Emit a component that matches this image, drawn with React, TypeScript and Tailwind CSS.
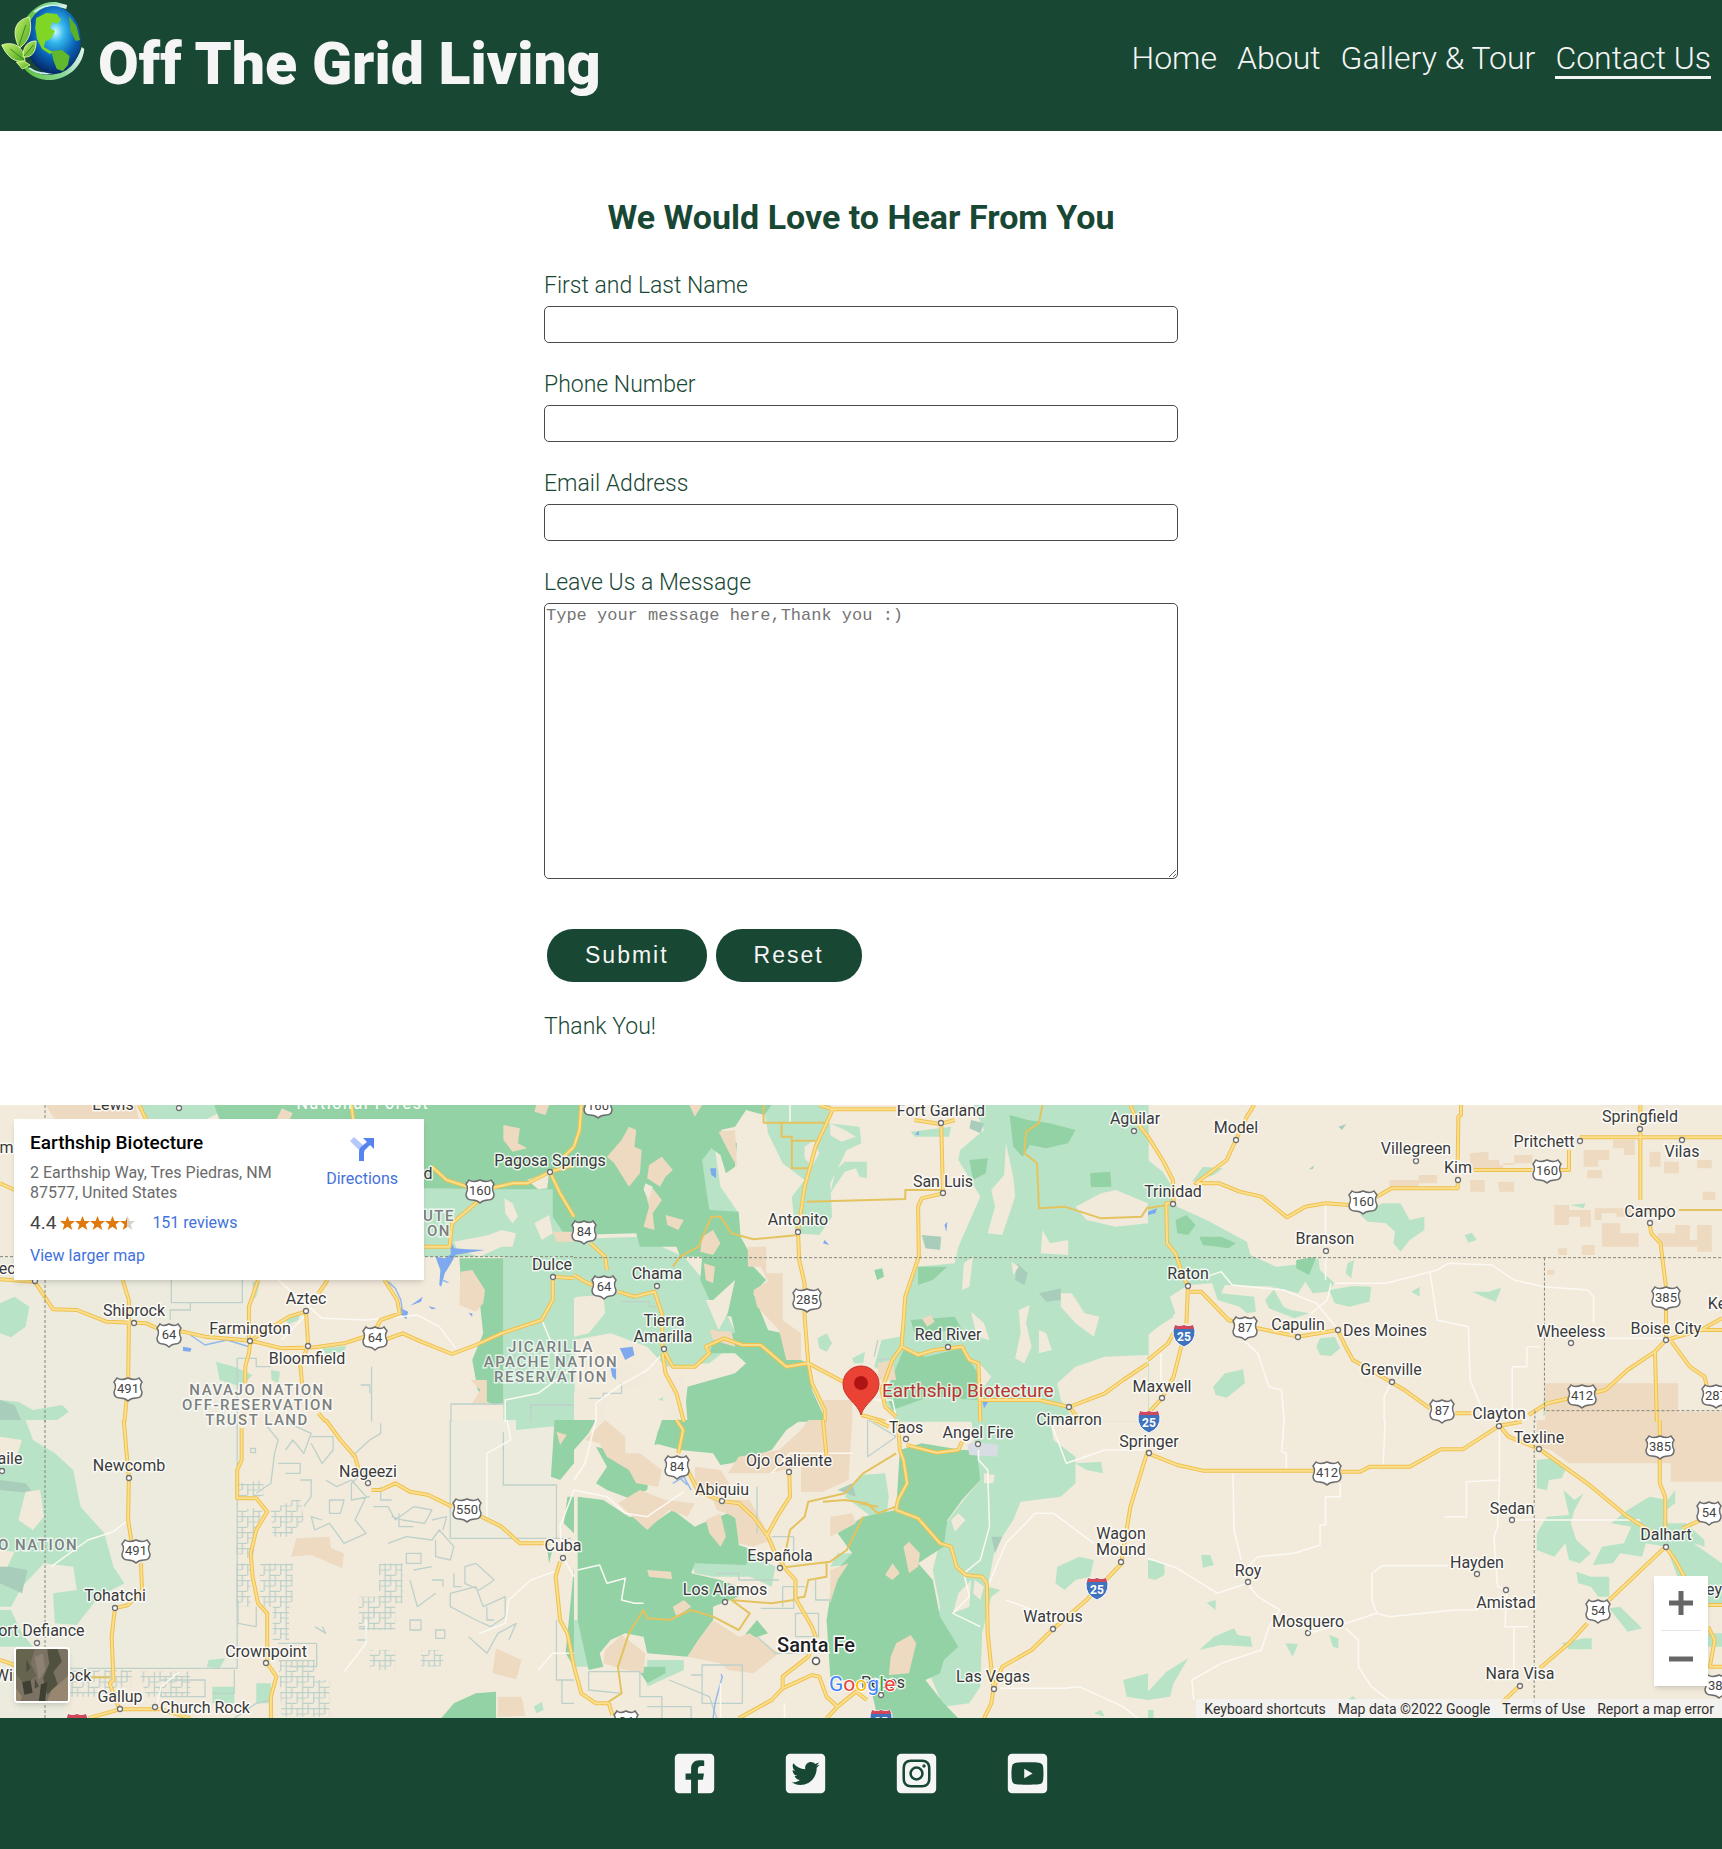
import React from "react";
import {
  FaFacebookSquare,
  FaInstagramSquare,
  FaTwitterSquare,
  FaYoutubeSquare,
} from "react-icons/fa";

/* ---------- Map data ---------- */

type Sheet = {
  x: number;
  y: number;
  tint?: string;
  light?: string;
  dark?: string;
  gray?: string;
  tan?: string;
  land?: string;
  parcels?: string;
  parcelLines?: string;
  water?: string;
  streams?: string;
  minor?: string;
  roads?: string;
  thinRoads?: string;
  borders?: string;
};

const sheets: Sheet[] = [
  {
    x: 0,
    y: -5,
    tint: "M0 470H690L650 965H0Z",
    light:
      "M380 15H640L560 60H400Z M1158 262H1568V470H1158Z M1375 470H1570V965H1375Z M0 610L40 590 80 620 70 680 30 712 0 700Z M0 900L50 905 90 930 170 915 188 935 150 965H0Z M590 785L640 800 690 825 660 860 600 840Z M740 810L765 815 760 850 742 840Z M690 545H710L700 590 690 600Z M778 660L820 640 815 660 790 672Z M880 745L945 738 940 755 890 762Z",
    dark:
      "M585 15H1570V268H1370L1158 265V60H600Z M1510 200H1570V400H1540L1510 350Z M1255 475H1375V910L1350 915 1330 905 1305 870 1290 780 1320 700 1310 600 1260 560Z",
    gray: "M0 900L40 915 60 965H0Z",
    tan:
      "M125 15H370L380 60H150Z M770 25L800 40 790 60H755Z M1375 75L1420 85 1415 130 1440 145 1400 155 1375 120Z M1465 15H1500L1490 45 1460 35Z M1258 515L1290 510 1325 570 1320 610 1300 635 1255 615Z M1285 840H1330V910H1290L1312 870Z M1510 395H1570V425H1520Z",
    land:
      "M1440 240L1500 215 1495 265 1470 268Z M1378 295L1400 310 1415 350 1400 370 1380 340Z M1460 370L1500 345 1510 400 1480 420Z M1335 405L1370 390 1410 400 1400 440 1370 440 1310 470 1250 450 1240 425Z",
    water:
      "M1228 420L1242 445 1275 448 1325 450 1245 464 1232 490 1215 520 1205 560 1200 555 1203 510 1196 490 1190 470 1215 475 1232 462Z M1095 625L1115 635 1110 658 1096 645Z M500 740L523 745 520 755 500 753Z M1280 640H1290V650Z M1130 610L1155 590 1150 605 1120 617Z M1170 618L1192 625 1180 628Z",
    streams:
      "M1060 545L1080 565 1095 600 1100 640 M520 705L560 735 620 720 680 740 M1208 540L1225 548",
    parcelLines:
      "M468 540V608H662V540 M520 610V630H465V660 M1232 965V912H1385 M1450 965V915H1568 M1015 800V965 M985 855H1010V880 M648 965V775H700V800H740",
    minor:
      "M760 540L880 655 1000 660 1140 645 1200 680 1245 745 M840 640L770 720 M1480 660L1530 790 M1568 800L1470 880 1380 900V965",
    roads:
      "M0 538L95 545 145 628 210 630 290 665 365 668 400 670 440 690 500 695 560 710 640 718 684 722 770 745 860 742 940 730 1010 705 M1050 720L1100 700 1150 725 1235 762 1300 735 1370 700 1480 660 1510 600V530L1568 535 M335 540L352 600 352 680 350 850 340 965 M684 722L680 760 670 800V850 M668 940L665 965 M836 634L842 738 820 790 825 850 M870 940L890 965 M836 634L790 650 745 680 684 722 M705 540L680 620V720 M895 540L870 580 M1050 540L1085 600 1092 640 1040 660 1020 700 M1158 440H1228L1235 370 1310 300 M1180 200L1220 240 1310 272 1400 250 1440 250 1502 216 1568 195 M1502 216L1530 280 1568 350 M1568 140L1540 170 M380 15L400 60 M960 15L965 60 M0 250L40 270",
    borders: "M123 15V965 M0 470H1568",
  },
  {
    x: 574,
    y: -5,
    light:
      "M0 400L60 415 180 410 300 470 400 600 450 720 370 790 250 800 200 740 100 700 0 720Z M350 150L385 145 400 260 450 340 380 350 340 290Z M518 15H700L695 70 780 80 785 130 745 150 700 250 705 350 670 405 605 400 595 290 630 240 570 190 530 100Z M715 210L740 185 800 185V235L780 230 770 205 740 215 700 280Z M920 95L1030 80 1025 110 930 110Z M1090 15H1570V965H880L850 900 870 830 820 800 840 720 890 710 905 600 935 500 1040 490 1050 440 1110 290 1080 235 1050 180 1055 150 1120 90Z M665 715L690 700 705 730 690 755 670 745Z M760 775L795 755 790 790 765 790Z M230 900L270 870 260 905Z",
    dark:
      "M0 15H540L520 45 470 30 440 80 400 90 445 130 440 200 415 220 400 165 375 145 350 180 360 260 370 330 450 335 455 410 475 450 490 500 525 540 490 580 530 690 570 700 600 770 640 790 650 870 690 965H300L310 860 440 820 470 790 440 760 370 760 390 690 440 700 430 650 390 640 370 600 345 540 350 470 290 470 280 440 180 440 170 400 0 405Z M1190 45L1240 60 1300 70 1370 90 1350 130 1290 145 1245 135 1225 170 1200 140Z M1410 220L1465 215 1468 260 1412 262Z M1080 180L1130 175 1125 220 1090 240Z M900 750L960 770 1060 745 1120 850 1100 900 970 890 870 930 850 880Z M820 510L842 505 847 530 828 540Z M940 500L1020 500 980 540 940 555Z M920 660L1040 650 1060 690 930 700Z M0 915H15V965H0Z",
    gray: "M950 405L1003 410 1000 450 960 445Z M1210 490L1240 520 1230 555 1205 540Z M1270 580L1330 565 1330 600 1290 605Z M1085 60L1120 70 1110 100 1080 85Z",
    tan:
      "M315 15H350L330 50Z M90 170L130 120 150 80 170 90 165 140 185 150 180 220 150 260 110 190Z M205 195L240 170 270 210 250 230 235 260 200 235Z M190 260L215 265 240 300 215 340 220 390 190 380 205 320Z M250 345L300 360 285 390 255 375Z M350 410L380 390 400 430 380 465 345 455Z M355 490L385 500 380 550 360 540Z M395 95L440 90 445 200 420 150Z M475 440H525V520L570 520V660L620 700V780H580L560 690 500 620 490 570 530 545 510 500 475 500Z M370 690L430 695 440 740 380 720Z M680 900H760V965H680Z M950 655L975 645 985 665 965 680Z M830 790L870 780 880 840 830 840Z",
    land:
      "M195 250L215 260 205 300 190 270Z M1180 130L1200 230 1205 290 1170 405 1130 400 1150 320 1140 270 1175 225Z M380 600L440 540 420 640 395 690 360 600Z M10 590L80 585 85 640 40 700 0 710V595Z M700 70L740 90 770 110 730 125 700 105Z M630 140L655 120 670 160 650 200 630 175Z M1370 320L1440 280 1480 270 1568 310V370L1480 380 1400 360Z M1280 390L1300 430 1350 420 1350 465 1275 460Z M1065 490L1090 470 1080 560 1060 570Z M1195 485L1215 500 1200 525Z M1330 580L1360 580 1395 640 1435 650 1420 710 1370 670 1330 620Z M1215 630L1245 615 1235 670 1250 740 1230 790 1205 775 1220 700Z M1270 690L1290 700 1305 750 1270 760Z M1085 635L1120 670 1135 720 1100 710Z M1100 780L1140 830 1120 860 1105 840Z M1320 850L1370 800 1450 770 1568 765V965H1370L1330 900Z M240 870L300 820 310 965H250Z M20 860L90 880 80 965H0V880Z M100 780L180 800 210 850 130 870Z",
    water:
      "M372 205L388 205 388 235 375 225Z M125 745L160 740 165 765 140 780Z M932 103L942 92V106Z M1012 375L1020 365 1017 395Z M1115 900L1135 900 1120 925Z M685 420L697 435 680 430Z M100 805L115 800V840L105 830Z",
    parcelLines: "M130 605H205V620H235 M40 895H80V880H130V850 M820 770L830 720 M830 780L860 775",
    minor:
      "M235 770L200 810 120 860 60 910V965 M590 15V70 M820 900H870L880 950",
    roads:
      "M20 15L15 90 0 140 M45 430L85 470 90 510 M0 525L30 545 60 560 M120 575L165 590 220 575 240 640 242 745 270 800 330 800 370 760 360 740 410 715 460 735 510 735 580 800 640 790 735 845 M242 760L250 820 280 880 300 965 M707 28L660 140 630 260 612 395 615 480 630 550 630 650 640 790 650 850 685 930V965 M670 15L707 28H880 M1003 70L1008 280 950 295 940 320 942 470 905 590 895 740 940 765 985 750 1060 740 1080 780 1105 790 1110 965 M930 60L1000 72 1040 60 M1520 15L1540 70 1568 110 M895 740L870 780 840 870 850 920 880 950 M1110 900H1270L1353 921 1450 880 1500 840 1568 790 M1353 921L1385 965 M785 945L850 965",
    thinRoads:
      "M518 15V68H690 M567 68V110H595V205H640 M595 122H660 M635 305L905 297V270H1008 M612 405L490 418 430 400 400 350 375 350 340 440 290 470 270 500 M1280 15L1270 70 1235 95 1230 160 1265 190 1270 325 1340 320 1440 355 1550 350 1568 320",
    borders: "M0 473H1568",
  },
  {
    x: 1148,
    y: -5,
    light:
      "M0 180L40 215 60 250 80 320 160 360 270 425 280 465 350 500 440 490 465 475 470 510 510 550 490 575 450 580 430 545 410 580 340 560 370 620 390 630 440 640 400 655 330 625 320 600 350 560 210 555 200 580 290 590 295 635 270 640 250 620 190 600 175 550 110 555 60 590 75 640 0 705Z M0 600L50 620 70 650 0 700Z M120 245L150 200 205 205 180 225Z M580 345L640 310 690 310 715 360 755 350 755 390 715 420 690 455 670 430 675 395 650 370 600 365Z M865 405L885 398 898 420 875 428Z M495 570L560 558 610 560 605 605 550 620 510 610Z M545 490L563 480 555 535 540 520Z M720 575L742 560V590Z M885 575L930 575 965 563 950 605 925 595Z M460 740L470 715 510 710 525 745 500 768 470 765Z M178 860L210 820 260 808 265 850 215 893 185 885Z M1080 900L1100 885V920L1080 950Z M1155 315L1195 310 1190 325Z",
    dark: "M75 360L105 345 130 375 110 405 80 400Z M405 480L460 470 440 525 405 505Z M140 410L200 410 240 430 220 445 150 435Z",
    gray: "M440 208L455 195 450 207Z M520 80L542 72 530 90Z",
    tan:
      "M1085 850H1448V935H1085Z M1085 935H1568V965H1085Z M880 160L930 155V180H960V195H1000V165H1050V190H970V210H880Z M660 240H740V225H790V250H740V265H660Z M880 240H920V275H880Z M955 245H1000V275H960Z M1190 150H1260V180H1230V200H1190Z M1200 210H1240V235H1200Z M1270 120H1330V165H1300V145H1270Z M1150 330H1210V380H1180V350H1150Z M1110 315H1150V375H1110Z M1220 325H1340V350H1280V340H1240V360H1220Z M1240 370H1290V400H1340V440H1240Z M1390 400H1440V375H1480V420H1500V375H1540V455H1500V440H1400Z M1120 445H1145V465H1120Z M1185 435H1220V465H1185Z M1370 155H1400V200H1370Z M1410 185H1450V220H1410Z M1500 180H1540V205H1500Z M1360 320H1420V345H1360Z M1515 275H1550V300H1515Z M1090 510H1110V525H1090Z",
    water: "M0 335L25 325 20 340 0 345Z",
    minor:
      "M485 310V540 M160 530L200 515 230 555 370 570 460 610 520 690 M510 550H650L790 510 820 490 940 495 1000 540 1080 560 1200 570 1217 590V670 M770 515L790 660 875 680 880 840 910 920 M500 550L490 600 445 640 M260 720L300 760 330 860 365 870 372 965 M665 847L645 890V965 M1040 740H1070 M995 965V800H1035V740 M1200 715H1410 M35 760V895",
    roads:
      "M240 120L270 50 290 15 M240 120L215 180 130 250 195 250 250 275 310 290 380 352 430 320 485 310 550 315 M625 290L665 265H846V240 M846 180L848 50 855 45V15 M890 210H1050 M1120 210H1150V150 M1180 112H1568 M1345 15V300 M1370 370L1375 400 1400 430 1415 560 M1415 625V720L1385 755 1310 810 1250 870 1090 910 1040 945 M1385 755L1390 965 M1415 720L1510 690 1568 655 M1510 690H1568 M1430 725L1480 800 1520 830 1530 870 M0 110L40 180 68 240 70 310H50L52 430 75 460 90 510 109 560 105 670 M92 735L70 830 38 895 0 940 M0 780L55 730 70 700 M115 575H145L220 660 300 685 410 710 518 690 540 740 560 780 665 847 700 870 770 925 M840 940H885",
    thinRoads: "M1450 330H1568 M0 325L50 315",
    borders: "M0 473H1568 M1083 473V932H1568 M1057 932V965",
  },
  {
    x: 0,
    y: 315,
    tint: "M0 0H652L645 745H180V895H0Z M1230 0H1515V355H1230Z",
    light:
      "M0 0H70L90 60 150 100 200 150 220 260 285 340 310 440 340 490 270 530 220 600 210 615 150 610 145 520 210 510 200 440 120 430 60 500 30 560 0 560Z M570 720L615 715 600 745 565 740Z M0 570H30L60 640 90 680H0Z M1410 0H1568V20L1500 20 1410 30Z M580 800H640V850H580Z M700 790H740V850H700Z M1458 860L1480 845 1485 870 1465 880Z",
    dark: "M1515 0H1568V130L1530 180 1505 170Z M1205 895L1240 850 1300 820 1355 815 1355 895Z M1550 230H1568V340L1540 310Z M1495 390L1510 385 1500 430Z M1568 440V740L1545 700Z",
    gray: "M0 180L70 190 90 220 0 210Z M0 435L75 450 60 520 0 490Z",
    tan: "M810 355L900 350 905 385 940 400 935 445 850 405 795 410Z M1355 685L1425 720 1410 778 1345 760Z M1360 830H1425L1435 888 1360 890Z M1520 35L1548 45 1530 75Z",
    land: "M70 215L110 210 120 290 90 330 50 300Z M0 50L60 60 40 130 0 130Z M0 390L40 395 20 440 0 440Z",
    parcels:
      "M650 270L720 260 700 340 690 420 645 400Z M740 270L820 230 830 300 790 350 745 350Z M645 430H685V560H645Z M710 430H800V560H790V660H745V560H710Z M185 750H360V800H330V830H185Z M380 755H520V830H400Z M1035 430H1100V550H1080V630H980V530H1035Z M760 720H860V780H900V890H770Z M1010 690H1080V750H1010Z M1150 690H1210V740H1150Z M650 190L720 180V230H650Z",
    parcelLines:
      "M648 0V745H180 M1230 0V355H1560 M1375 35V195H1520V355 M730 20L760 60 750 100 740 190 700 220 M790 10L850 40 830 100 800 60 780 90 M760 130H820V160H780 M850 50H910V90L880 130 850 70 M890 180L920 200 960 180 1000 230 970 300 1000 340 940 370 900 310 860 330 850 290 880 300 M960 110L1010 60 1040 40V10 M1000 150L960 190V240L1010 230 M1020 260H1060L1080 300 1130 260 1180 270 1160 310 1100 300 1070 290 M1060 370L1110 350 1180 360 1200 330 1240 380 1230 420 1190 410V360 M1130 450L1180 440 M1270 440L1300 430 1350 480 1310 510 1270 490Z M1230 520L1300 500 1320 560 1380 530V590L1340 620 1300 600 1230 560Z M1120 480L1140 560 1190 520 M1120 600H1150V630H1120Z M1190 630H1215V655H1190Z M1280 650L1330 700 1360 640 1410 610 1390 660 M980 620H1000V660H975 M860 620L890 640 880 620 M685 85H698V98H685Z M640 750V820H580 M440 780H560V830H440V800 M1520 600V780H1568 M1535 780V850H1568 M760 670H865V740H790 M650 540V610L700 620V560 M640 895L700 850 740 840 M820 180H850V230L830 260 M900 240H940L930 280H900Z M1040 200V240H1070 M1090 280V320H1130 M1180 300L1220 290 1210 330 M1110 400H1150V430H1110Z M1180 480H1210V500 M1240 460V500H1260 M1330 560V600H1350",
    minor:
      "M350 300L310 335 240 360 140 440 M1000 600V670L940 755 M1385 0L1395 60 1330 100V300 M1515 455L1450 480 1390 540 1380 610 1310 640 M490 755L440 800 430 850 M1568 210L1530 320 1537 410 1568 470 M1568 700L1510 700 1470 750",
    roads:
      "M338 0L345 90 352 173 350 300 360 370 M385 430L388 510 350 555 314 565 305 650 310 780 300 790 315 840 327 868 240 895 M327 868H440L520 895 M660 25V120L648 150V235H700L730 275 700 330 685 400 690 470 705 550 730 580 730 730 755 770 740 830V895 M890 0L930 60 970 110 980 150 M1015 210L1040 210 1080 190 1120 215 1170 225 1235 260 M1315 290L1370 320 1420 370H1500 M1530 425L1518 470 1530 600 1550 640 1568 740 M0 720L40 735",
    thinRoads: "M250 772H300",
    borders: "M123 0V895",
  },
  {
    x: 574,
    y: 315,
    light:
      "M1085 0H1300L1310 60 1370 110 1370 190 1330 230 1220 245 1200 300 1150 385 1130 500 1165 510 1140 530 1115 640 1110 800 1080 850 1010 860 970 760 1000 560 980 450 1010 320 1050 260 1110 180Z M320 430L480 400 550 440 540 500 480 470 380 470 330 460Z M780 165L850 160 860 230 850 320 800 280 740 230Z M720 400L810 400 780 430 700 440Z M1320 440L1380 410 1420 420 1410 470 1370 480 1340 510 1315 490Z M1370 130L1440 125 1445 160 1400 150Z M1500 780L1568 760V840L1510 830Z M0 600H40V740H0Z M200 720H300V750L200 800Z M1420 880L1440 870 1450 890Z M0 0H60L30 40 0 60Z",
    dark:
      "M0 0H60L40 40 0 90Z M60 80L100 90 150 140 205 165 200 210 150 235 90 210 60 190 90 140Z M240 0H620L580 30 540 90 430 130 400 135 380 100 290 90 220 70Z M10 230L80 240 150 290 230 300 270 270 330 320 350 310 420 280 450 300 450 375 490 390 470 435 330 430 320 460 400 480 450 500 450 530 380 560 380 600 340 660 310 710 200 700 190 650 140 640 100 660 70 700 80 740 40 750 10 600Z M170 740H250V760L200 790Z M890 90L950 70 1060 90 1100 90 1110 180 1060 240 1020 300 1010 380 940 430 980 480 1000 590 1050 680 1010 720 1000 760 960 780 1010 850 1050 895H830L810 800 700 770 690 600 710 460 760 400 720 340 790 290 880 270Z M470 640L500 600 530 640 460 665Z M230 30L270 60 220 75Z",
    gray: "M720 210L760 190 770 230Z M1140 350L1170 350 1150 400Z",
    tan:
      "M85 0L140 50 140 100 180 100 240 150 230 200 170 190 150 150 90 110 70 70 30 60Z M450 110L560 90 620 30 640 0H760L750 180 680 215 620 215V140L530 160 420 160Z M120 250L180 210 250 240 330 250 310 290 260 270 200 330 170 300Z M360 300L400 280 415 350 400 380 370 340Z M380 240H480L540 360 490 380 450 370 440 290 390 270Z M200 450L265 455 268 478 205 470Z M270 560L300 540 320 560 280 590Z M340 660L380 600 450 650 480 640 560 700 490 760 420 750 400 730 310 710Z M85 690L130 645 195 700 190 760 140 750 80 730Z M700 290L760 280 770 310 700 350Z M700 450L750 430 720 480 700 550Z M900 380L915 365 945 400 940 440 915 460Z M870 430L890 460 870 480 850 465Z M880 670L920 645 935 670 915 760 860 765 865 710Z M330 140L400 150 430 200 380 240 330 210Z",
    land: "M1030 300L1050 280 1070 300 1040 335Z M1050 520L1085 480 1080 560 1035 580Z M1095 480L1120 500 1110 540 1090 520Z M1120 160L1150 165 1145 190 1120 190Z",
    water:
      "M1075 75L1090 65 1160 75 1155 110 1080 105Z",
    streams: "M402 762L406 775 M405 770L385 850 380 895 M270 190L300 170 320 210 M290 175L310 195",
    parcelLines:
      "M40 755H180V830H240V895 M40 755L40 810 130 820 M200 860H320V895 M260 780L370 830 390 895 M350 735H460V850H350Z M320 765H350 M605 580H668V650H605Z M510 565H600V500 M660 480V540H700 M600 350V400 M540 350H600 M802 0V110L880 50 M805 0L880 50 M630 500H570V560 M390 460H450V480H560 M640 700H550L500 650 M500 340V200",
    minor:
      "M60 0L30 130 0 180 M0 210L90 230 140 280 200 290 300 215 M10 450L70 435 90 490 140 475 130 540 165 550 190 550 M1105 90V120L1130 150 1135 320 1110 420 1065 460 1080 530 1035 580 1110 620 M1300 0L1345 130 1450 90H1568 M1130 500L1180 370 1260 280 1310 280 1420 370 M1180 540L1230 560 1310 600 M1165 805H1340L1380 800 1500 860 1540 895 M540 160L590 100H760 M400 790V895 M575 850V895",
    roads:
      "M280 0L298 30 285 100 M310 150L340 215 403 243 450 250 490 290 530 350 550 400 580 450 605 480V535L650 620 660 650 M588 156L590 230 555 290 525 350 M680 0L690 110 M885 0L890 90 900 120 910 190 885 240 880 270 940 295 1000 370 1030 380 1045 440 1070 465 1115 470 1128 490 1130 640 1146 806 1170 740 1250 690 1309 627 1400 540 1500 426 M1495 426L1520 260 1568 90 M908 75L990 98 1050 90 1060 65 M660 650L640 710 570 770V805 M450 895L540 840 570 805 650 765 670 770 690 830 720 860 770 815 800 840 M720 860L690 895 M1146 806L1140 850 1120 895 M0 740L20 820 60 850 95 850 105 885 M820 0L860 20",
    thinRoads:
      "M150 640L120 740 130 820 95 845 M150 640L190 570 200 595 260 600 320 570 380 590 450 630 480 580 430 540 540 550 600 540 M605 535L630 530 640 480 690 470V430 M564 443L700 425 745 390 790 290 M880 100L790 160 740 220 640 245 630 290 590 330 570 440 M680 245L740 240 800 250 830 280 880 260 M830 260L780 250",
  },
  {
    x: 1148,
    y: 315,
    light:
      "M0 420L45 430 45 465 20 480 0 475Z M145 405H170L180 435 150 443Z M140 690L180 650 235 625 245 645 280 650 285 680 200 675Z M375 670L410 672 395 710Z M495 645L520 655 520 685 505 680Z M160 548L185 540 185 570Z M0 815L50 755 110 715 70 790 60 830 0 840Z M1062 120L1100 115 1140 150 1130 175 1095 180 1090 210 1062 205Z M1135 210L1165 240 1190 220 1165 270 1155 310 1170 360 1210 400 1180 430 1150 420 1140 370 1110 410 1062 390V340L1090 290 1150 285Z M1265 310L1310 270 1370 230 1420 240 1440 210 1440 250 1415 270 1420 310 1470 310 1520 360 1520 380 1490 370 1568 430V560H1530V640H1568V680H1500L1450 480 1415 380 1360 370 1350 410 1290 400 1270 430 1215 435 1240 380 1300 370 1320 320Z M1170 455L1210 470 1260 470V530H1230L1210 500 1175 490Z M1260 565L1290 560 1350 625 1310 635Z M1130 670L1190 655H1212V688H1150Z M1130 75L1155 60V85Z M545 840L560 828 570 840Z M0 870H15V895H0Z",
    tan: "M1062 0H1568V185H1428V130H1150L1100 90 1062 80Z",
    minor:
      "M372 0L365 95 378 100V150 M648 0L642 140 M232 160L235 330 255 420 M525 190V230H485V315H470V375L400 400 300 410 272 440 M960 20V180L870 185V290H810 M960 180L955 320 945 350 955 500 980 510 975 620H1040 M995 300H1345 M820 437H640L612 460V540L625 580 660 590 750 580 840 570H900 M0 415L80 445 190 520 272 490 300 530 360 570 330 620 310 690 200 730 120 780 125 840 M437 640L540 610 625 580 M540 625L575 660V740L610 800 670 850 M1000 620V750",
    roads:
      "M0 100L80 135 150 152H455 M525 155H580L605 140H715L800 88H860L960 17 1020 5 M960 17L985 50 1069 87 1200 190 1310 290 1380 340 M1398 0V50 M1398 110V190L1413 230V330 M1414 380L1260 540 M1200 610L1150 670 1070 745 M1015 797L965 850 M1414 380L1440 420 1465 470 M1510 300L1460 325 M1530 620L1548 660 1535 740H1568 M1530 555H1568",
    borders: "M1055 0V850",
  },
];

type Place = [string, number, number, number?, number?];
// name, label x, label centre y, dot x, dot y
const places: Place[] = [
  ["Lewis", 113, 0, 179, 3],
  ["Aztec", 306, 194, 306, 206],
  ["Shiprock", 134, 206, 134, 218],
  ["Farmington", 250, 224, 250, 236],
  ["Bloomfield", 307, 254, 308, 241],
  ["Pagosa Springs", 550, 56, 550, 67],
  ["Dulce", 552, 160, 553, 172],
  ["d", 428, 69],
  ["um", 2, 43],
  ["eec", 3, 164, 35, 176],
  ["Fort Garland", 941, 6, 941, 18],
  ["San Luis", 943, 77, 943, 88],
  ["Antonito", 798, 115, 798, 127],
  ["Chama", 657, 169, 657, 181],
  ["Tierra", 664, 216],
  ["Amarilla", 663, 232, 664, 244],
  ["Red River", 948, 230, 948, 242],
  ["Aguilar", 1135, 14, 1134, 26],
  ["Cimarron", 1069, 315, 1069, 302],
  ["Taos", 906, 323, 906, 334],
  ["Angel Fire", 978, 328, 978, 339],
  ["Model", 1236, 23, 1236, 35],
  ["Villegreen", 1416, 44, 1416, 56],
  ["Kim", 1458, 63, 1458, 75],
  ["Pritchett", 1544, 37, 1580, 36],
  ["Springfield", 1640, 12, 1640, 24],
  ["Vilas", 1682, 47, 1682, 35],
  ["Trinidad", 1173, 87, 1173, 99],
  ["Branson", 1325, 134, 1326, 146],
  ["Campo", 1650, 107, 1650, 118],
  ["Raton", 1188, 169, 1188, 181],
  ["Capulin", 1298, 220, 1298, 232],
  ["Des Moines", 1385, 226, 1338, 225],
  ["Wheeless", 1571, 227, 1571, 238],
  ["Boise City", 1666, 224, 1666, 235],
  ["Grenville", 1391, 265, 1392, 277],
  ["Maxwell", 1162, 282, 1162, 293],
  ["Clayton", 1499, 309, 1499, 321],
  ["Ke", 1717, 199],
  ["Texline", 1539, 333, 1539, 344],
  ["Springer", 1149, 337, 1149, 348],
  ["Sedan", 1512, 404, 1512, 415],
  ["Hayden", 1477, 458, 1477, 469],
  ["Amistad", 1506, 498, 1506, 485],
  ["Dalhart", 1666, 430, 1666, 442],
  ["Roy", 1248, 466, 1248, 477],
  ["Mosquero", 1308, 517, 1308, 528],
  ["Nara Visa", 1520, 569, 1520, 581],
  ["ey", 1714, 485],
  ["Wagon", 1121, 429],
  ["Mound", 1121, 445, 1121, 457],
  ["Ojo Caliente", 789, 356, 789, 367],
  ["Abiquiu", 722, 385, 722, 396],
  ["Española", 780, 451, 780, 463],
  ["Los Alamos", 725, 485, 725, 497],
  ["Watrous", 1053, 512, 1053, 524],
  ["Las Vegas", 993, 572, 994, 584],
  ["Pecos", 883, 578, 881, 590],
  ["Newcomb", 129, 361, 129, 373],
  ["Nageezi", 368, 367, 368, 378],
  ["Tohatchi", 115, 491, 115, 503],
  ["Fort Defiance", 37, 526, 37, 538],
  ["Crownpoint", 266, 547, 266, 558],
  ["Gallup", 120, 592, 120, 604],
  ["Church Rock", 205, 603, 155, 602],
  ["Window Rock", 43, 571],
  ["aile", 10, 354, 2, 366],
  ["Cuba", 563, 441, 563, 453],
];

const regions: [string, number, number][] = [
  ["UTE", 439, 111],
  ["ON", 439, 126],
  ["NAVAJO NATION", 257, 285],
  ["OFF-RESERVATION", 258, 300],
  ["TRUST LAND", 257, 315],
  ["JICARILLA", 551, 242],
  ["APACHE NATION", 551, 257],
  ["RESERVATION", 551, 272],
  ["O NATION", 38, 440],
];

const routes: [string, number, number][] = [
  ["160", 480, 86],
  ["64", 169, 230],
  ["64", 375, 233],
  ["491", 128, 284],
  ["84", 584, 127],
  ["64", 604, 182],
  ["285", 807, 195],
  ["160", 598, 1],
  ["160", 1363, 97],
  ["160", 1547, 66],
  ["385", 1666, 193],
  ["87", 1245, 223],
  ["412", 1582, 291],
  ["287", 1716, 291],
  ["87", 1442, 306],
  ["491", 136, 446],
  ["550", 467, 405],
  ["84", 677, 362],
  ["412", 1327, 368],
  ["385", 1660, 342],
  ["54", 1709, 408],
  ["54", 1598, 506],
  ["385", 1719, 581],
  ["84", 626, 617],
];

const interstates: [number, number][] = [
  [1184, 230],
  [1149, 316],
  [1097, 483],
  [881, 615],
  [77, 619],
];

function SheetLayer({ s, layer }: { s: Sheet; layer: "ground" | "lines" }) {
  const transform = `translate(${s.x} ${s.y}) scale(0.36607 0.33333)`;
  if (layer === "ground") {
    return (
      <g transform={transform}>
        {s.tint && <path d={s.tint} fill="#ecebde" />}
        {s.light && <path d={s.light} fill="#b9e3c7" />}
        {s.dark && <path d={s.dark} fill="#93d2a5" />}
        {s.gray && <path d={s.gray} fill="#a9cdbb" />}
        {s.tan && <path d={s.tan} fill="#eddac1" />}
        {s.land && <path d={s.land} fill="#f1e9da" />}
        {s.water && <path d={s.water} fill={s.y > 0 ? "#d8dde4" : "#7fa9ee"} />}
      </g>
    );
  }
  const line = {
    fill: "none",
    vectorEffect: "non-scaling-stroke" as const,
    strokeLinejoin: "round" as const,
  };
  return (
    <g transform={transform}>
      {s.parcels && <path d={s.parcels} fill="url(#parcel)" />}
      {s.parcelLines && <path d={s.parcelLines} {...line} stroke="#bdd1ca" strokeWidth="1.3" />}
      {s.streams && <path d={s.streams} {...line} stroke="#93b9ea" strokeWidth="1.5" />}
      {s.minor && <path d={s.minor} {...line} stroke="#fbf9f3" strokeWidth="1.5" />}
      {s.thinRoads && <path d={s.thinRoads} {...line} stroke="#e4c35f" strokeWidth="2" />}
      {s.roads && <path d={s.roads} {...line} stroke="#efc04d" strokeWidth="4" />}
      {s.roads && <path d={s.roads} {...line} stroke="#fbdf8d" strokeWidth="2" />}
      {s.borders && (
        <path d={s.borders} {...line} stroke="#85857c" strokeWidth="1" strokeDasharray="3 2" />
      )}
    </g>
  );
}

function TerrainMap() {
  return (
    <svg
      className="block h-[613px] w-full bg-[#f2ebdc] font-[Roboto,sans-serif]"
      viewBox="0 0 1722 613"
      preserveAspectRatio="xMidYMid slice"
      role="img"
      aria-label="Map of northern New Mexico"
    >
      <defs>
        <pattern id="parcel" width="45" height="48" patternUnits="userSpaceOnUse">
          <path
            d="M0 2H45 M0 18H30 M15 34H45 M2 0V34 M17 2V48 M32 2V18 M32 34V48"
            fill="none"
            stroke="#bdd1ca"
            strokeWidth="3.5"
          />
        </pattern>
      </defs>
      {sheets.map((s, i) => (
        <SheetLayer key={i} s={s} layer="ground" />
      ))}
      {sheets.map((s, i) => (
        <SheetLayer key={i} s={s} layer="lines" />
      ))}

      {routes.map(([n, x, y], i) => {
        const w = n.length > 2 ? 14 : 12;
        return (
          <g key={i} transform={`translate(${x} ${y})`}>
            <path
              d={`M${-w + 3} -11Q${-w / 2} -8 0 -11Q${w / 2} -8 ${w - 3} -11L${w} -7Q${w - 3} -3 ${w} 3Q${w} 9 ${w - 6} 9Q3 9 0 12Q-3 9 ${-w + 6} 9Q${-w} 9 ${-w} 3Q${-w + 3} -3 ${-w} -7Z`}
              fill="#fff"
              stroke="#6d6d6d"
              strokeWidth="1.5"
            />
            <text y="4" textAnchor="middle" className="fill-[#444] text-[13px]">
              {n}
            </text>
          </g>
        );
      })}

      {interstates.map(([x, y], i) => (
        <g key={i} transform={`translate(${x} ${y})`}>
          <path
            d="M-9 -10Q-4 -8 0 -10Q4 -8 9 -10L11 -5Q12 7 0 12Q-12 7 -11 -5Z"
            fill="#3f73bd"
            stroke="#fff"
            strokeWidth="1"
          />
          <path d="M-9 -10Q-4 -8 0 -10Q4 -8 9 -10L10 -6H-10Z" fill="#d0485a" />
          <text y="6" textAnchor="middle" className="fill-white text-[12px] font-bold">
            25
          </text>
        </g>
      ))}

      {places.map(([name, x, y, dx, dy]) => (
        <g key={name}>
          {dx !== undefined && (
            <circle cx={dx} cy={dy} r="2.5" fill="#fff" stroke="#6f6f6f" strokeWidth="1.3" />
          )}
          <text
            x={x}
            y={y + 5}
            textAnchor="middle"
            stroke="#fff"
            strokeOpacity="0.8"
            strokeWidth="3"
            strokeLinejoin="round"
            paintOrder="stroke"
            className="fill-[#3a3a3a] text-[16px]"
          >
            {name}
          </text>
        </g>
      ))}

      {regions.map(([name, x, y]) => (
        <text
          key={name}
          x={x}
          y={y + 5}
          textAnchor="middle"
          stroke="#fff"
          strokeOpacity="0.7"
          strokeWidth="3"
          paintOrder="stroke"
          className="fill-[#7b8080] text-[15px] font-medium tracking-widest"
        >
          {name}
        </text>
      ))}

      <text x="363" y="4" textAnchor="middle" className="fill-white text-[16px] tracking-widest">
        National Forest
      </text>

      <circle cx="816" cy="556" r="3.5" fill="#fff" stroke="#555" strokeWidth="1.5" />
      <text
        x="816"
        y="547"
        textAnchor="middle"
        stroke="#fff"
        strokeWidth="3"
        paintOrder="stroke"
        className="fill-[#222] text-[20px] font-medium"
      >
        Santa Fe
      </text>

      <text
        x="829"
        y="586"
        stroke="#fff"
        strokeWidth="2"
        paintOrder="stroke"
        className="text-[21px]"
      >
        <tspan fill="#4285f4">G</tspan>
        <tspan fill="#ea4335">o</tspan>
        <tspan fill="#fbbc05">o</tspan>
        <tspan fill="#4285f4">g</tspan>
        <tspan fill="#34a853">l</tspan>
        <tspan fill="#ea4335">e</tspan>
      </text>

      <path
        d="M861 310C858 298 843 293 843 279A18 18 0 0 1 879 279C879 293 864 298 861 310Z"
        fill="#ea4335"
        stroke="#c5352b"
        strokeWidth="1"
      />
      <circle cx="861" cy="278" r="7" fill="#b01412" />
      <text
        x="882"
        y="292"
        stroke="#fff"
        strokeOpacity="0.6"
        strokeWidth="3"
        paintOrder="stroke"
        className="fill-[#b8362f] text-[19px]"
      >
        Earthship Biotecture
      </text>
    </svg>
  );
}

/* ---------- Small drawings ---------- */

function EarthLogo() {
  return (
    <svg className="h-[81px] w-[86px] shrink-0" viewBox="0 0 100 81" preserveAspectRatio="none" role="img" aria-label="Green earth">
      <defs>
        <radialGradient id="ocean" cx="0.55" cy="0.38" r="0.65">
          <stop offset="0" stopColor="#c8fbff" />
          <stop offset="0.25" stopColor="#35b8ee" />
          <stop offset="0.6" stopColor="#0a62b5" />
          <stop offset="1" stopColor="#04205c" />
        </radialGradient>
        <linearGradient id="leaf" x1="0" y1="0" x2="1" y2="1">
          <stop offset="0" stopColor="#c6f26e" />
          <stop offset="1" stopColor="#4aa41c" />
        </linearGradient>
        <linearGradient id="ring" x1="0" y1="0" x2="1" y2="0">
          <stop offset="0" stopColor="#58bf2f" />
          <stop offset="0.7" stopColor="#8fd9a0" />
          <stop offset="1" stopColor="#e4f6f2" />
        </linearGradient>
      </defs>
      <path
        d="M26 24C36 8 50 1 65 2L78 5 77 9C62 5 46 9 38 22Z"
        fill="url(#ring)"
      />
      <path
        d="M26 60C33 70 44 75 56 75C76 74 90 62 95 47L98 49C96 68 76 81 54 80C39 79 28 71 24 62Z"
        fill="url(#ring)"
      />
      <path d="M40 12C50 5 60 4 72 7" fill="none" stroke="#cdeff5" strokeWidth="2" />
      <path d="M34 68C50 78 74 74 88 58" fill="none" stroke="#cdeff5" strokeWidth="2" />
      <ellipse cx="62" cy="40" rx="32" ry="34" fill="url(#ocean)" transform="rotate(-6 62 40)" />
      <path
        d="M42 18L54 13 66 14 71 20 66 24 61 22 58 28 64 31 59 39 53 41 51 47 57 50 62 52 58 54 49 49 43 39 41 28Z"
        fill="#7fd624"
      />
      <path d="M60 51L72 50 81 56 79 65 73 71 66 69 62 60Z" fill="#62b82c" />
      <path d="M80 16L89 26 93 40 88 41 82 31Z" fill="#5cb026" />
      <path d="M22 47C13 31 18 20 34 17C38 29 35 40 23 48Z" fill="url(#leaf)" stroke="#e2f9ad" />
      <path d="M2 45C15 41 28 46 29 61C16 63 8 56 2 45Z" fill="url(#leaf)" stroke="#e2f9ad" />
      <path d="M27 57C26 47 32 41 42 41C42 52 37 58 27 57Z" fill="url(#leaf)" stroke="#e2f9ad" />
      <path d="M19 62L28 61 35 65 26 69Z" fill="url(#leaf)" stroke="#d3f48c" />
      <path d="M22 46L30 25M28 60L12 49M28 56L39 45" stroke="#2f8415" fill="none" />
    </svg>
  );
}

function DirectionsIcon() {
  return (
    <svg className="h-6 w-6" viewBox="0 0 24 24" aria-hidden="true">
      <path d="M0 4L4 0 13 8 10 14Z" fill="#b5c9fb" />
      <path d="M9 24V15Q9 11 12 9L17 5 13 1H24V12L20 8 16 12Q14 13 14 16V24Z" fill="#5583f0" />
    </svg>
  );
}

function Stars() {
  return (
    <svg className="h-[15px] w-[76px]" viewBox="0 0 76 15" role="img" aria-label="4.4 out of 5 stars">
      <defs>
        <linearGradient id="half">
          <stop offset="0.5" stopColor="#e0790b" />
          <stop offset="0.5" stopColor="#d6d2cc" />
        </linearGradient>
      </defs>
      {[0, 1, 2, 3, 4].map((i) => (
        <path
          key={i}
          transform={`translate(${i * 15} 0)`}
          d="M7.500 0L9.500 5H15L10.700 8.500 12.300 14 7.500 10.800 2.700 14 4.300 8.500 0 5H5.500Z"
          fill={i === 4 ? "url(#half)" : "#e0790b"}
        />
      ))}
    </svg>
  );
}

function SatelliteThumb() {
  return (
    <svg className="h-full w-full" viewBox="0 0 50 50" preserveAspectRatio="none" aria-hidden="true">
      <rect width="50" height="50" fill="#7b7264" />
      <path d="M0 0H18L14 14 20 26 8 34 0 24Z" fill="#66644f" />
      <path d="M30 0H40L44 12 36 22 40 34 30 44 26 28 32 14Z" fill="#50523f" />
      <path d="M18 8L26 4 28 20 22 30Z" fill="#8d8273" />
      <path d="M6 32L14 30 16 42 8 44Z M24 34L30 32 28 50H22Z" fill="#3f4034" />
      <path d="M34 40L50 26V50H30Z M0 38L6 46 4 50H0Z" fill="#978670" />
      <path d="M10 10L14 18 10 22Z M18 28L22 36 18 38Z" fill="#4a4c3c" />
    </svg>
  );
}

/* ---------- Page ---------- */

const navItems = ["Home", "About", "Gallery & Tour", "Contact Us"];

const fields = [
  { id: "name", label: "First and Last Name", type: "text" },
  { id: "phone", label: "Phone Number", type: "tel" },
  { id: "email", label: "Email Address", type: "email" },
];

const socials = [
  { name: "Facebook", Icon: FaFacebookSquare },
  { name: "Twitter", Icon: FaTwitterSquare },
  { name: "Instagram", Icon: FaInstagramSquare },
  { name: "YouTube", Icon: FaYoutubeSquare },
];

const labelClass = "block text-[23px] leading-6 font-light text-[#184734]";
const boxClass = "block w-full rounded-[5px] border border-[#4a4a4a] bg-white";
const buttonClass =
  "h-[53px] cursor-pointer rounded-[26px] bg-[#184734] px-[38px] font-['Liberation_Sans',Arial,sans-serif] text-[23px] tracking-[2px] text-[#f5f5f5]";

export default function App() {
  return (
    <div className="bg-white font-[Roboto,sans-serif]">
      <header className="flex h-[131px] items-start justify-between bg-[#184734] pr-[11px] text-[#f5f5f5]">
        <div className="flex items-start gap-3">
          <EarthLogo />
          <h1 className="pt-7 text-[59px] leading-[72px] font-black whitespace-nowrap">
            Off The Grid Living
          </h1>
        </div>
        <nav className="flex gap-5 pt-10 text-[32px] leading-9 font-light whitespace-nowrap">
          {navItems.map((item) => (
            <a
              key={item}
              href="#"
              className={
                item === "Contact Us" ? "border-b-3 border-[#f5f5f5]" : "border-b-3 border-transparent"
              }
            >
              {item}
            </a>
          ))}
        </nav>
      </header>

      <main>
        <section className="mx-auto w-full max-w-[634px] pt-16 pb-[66px]">
          <h2 className="text-center text-[34px] leading-11 font-bold whitespace-nowrap text-[#184734]">
            We Would Love to Hear From You
          </h2>
          <form className="pt-[35px]" onSubmit={(e) => e.preventDefault()}>
            {fields.map((f) => (
              <div key={f.id} className="mb-[30px]">
                <label htmlFor={f.id} className={labelClass}>
                  {f.label}
                </label>
                <input id={f.id} type={f.type} className={`${boxClass} mt-2 h-[37px] px-2`} />
              </div>
            ))}
            <label htmlFor="message" className={labelClass}>
              Leave Us a Message
            </label>
            <textarea
              id="message"
              placeholder="Type your message here,Thank you :)"
              className={`${boxClass} mt-2 h-[276px] px-px font-['Liberation_Mono',monospace] text-[17px] leading-6 placeholder:text-[#757575]`}
            />
            <div className="flex gap-[9px] pt-[50px] pl-[3px]">
              <button type="submit" className={buttonClass}>
                Submit
              </button>
              <button type="reset" className={buttonClass}>
                Reset
              </button>
            </div>
          </form>
          <p className="pt-[33px] text-[23px] leading-6 font-light text-[#184734]">Thank You!</p>
        </section>

        <section className="relative overflow-hidden">
          <TerrainMap />

          <div className="absolute top-[14px] left-[14px] flex h-[161px] w-[410px] justify-between bg-white px-4 pt-3 shadow-md">
            <div>
              <h3 className="text-[19px] leading-6 font-medium text-black">Earthship Biotecture</h3>
              <p className="pt-2 text-[16px] leading-5 text-[#6b6b6b]">
                2 Earthship Way, Tres Piedras, NM
                <br />
                87577, United States
              </p>
              <div className="flex items-center gap-1 pt-2 text-[16px] leading-6">
                <span className="text-[19px] text-[#444]">4.4</span>
                <Stars />
                <a href="#" className="pl-3 text-[#4272db]">
                  151 reviews
                </a>
              </div>
              <a href="#" className="block pt-[9px] text-[16px] leading-6 text-[#4272db]">
                View larger map
              </a>
            </div>
            <a
              href="#"
              className="flex flex-col items-center gap-[6px] pt-[6px] pr-[10px] text-[16px] leading-6 text-[#4272db]"
            >
              <DirectionsIcon />
              Directions
            </a>
          </div>

          <button
            type="button"
            aria-label="Show satellite imagery"
            className="absolute bottom-[15px] left-[14px] h-[56px] w-[56px] overflow-hidden rounded-sm border-2 border-white shadow-md"
          >
            <SatelliteThumb />
          </button>

          <div className="absolute right-[14px] bottom-8 flex h-[110px] w-[54px] flex-col items-center bg-white shadow-md">
            <button type="button" aria-label="Zoom in" className="flex h-[54px] w-full items-center justify-center">
              <svg className="h-6 w-6" viewBox="0 0 24 24" aria-hidden="true">
                <path d="M0 12H24M12 0V24" stroke="#666" strokeWidth="5" />
              </svg>
            </button>
            <div className="h-px w-10 bg-[#e6e6e6]" />
            <button type="button" aria-label="Zoom out" className="flex h-[55px] w-full items-center justify-center">
              <svg className="h-6 w-6" viewBox="0 0 24 24" aria-hidden="true">
                <path d="M0 12H24" stroke="#666" strokeWidth="5" />
              </svg>
            </button>
          </div>

          <div className="absolute right-0 bottom-0 flex h-[19px] items-center gap-3 bg-[#f5f5f5]/70 px-2 text-[14px] leading-4 whitespace-nowrap text-[#333]">
            <a href="#">Keyboard shortcuts</a>
            <span>Map data ©2022 Google</span>
            <a href="#">Terms of Use</a>
            <a href="#">Report a map error</a>
          </div>
        </section>
      </main>

      <footer className="flex h-[131px] items-start justify-center gap-[66px] bg-[#184734] pt-[33px] text-[#f5f5f5]">
        {socials.map(({ name, Icon }) => (
          <a key={name} href="#" aria-label={name}>
            <Icon className="h-[45px] w-[45px]" />
          </a>
        ))}
      </footer>
    </div>
  );
}
